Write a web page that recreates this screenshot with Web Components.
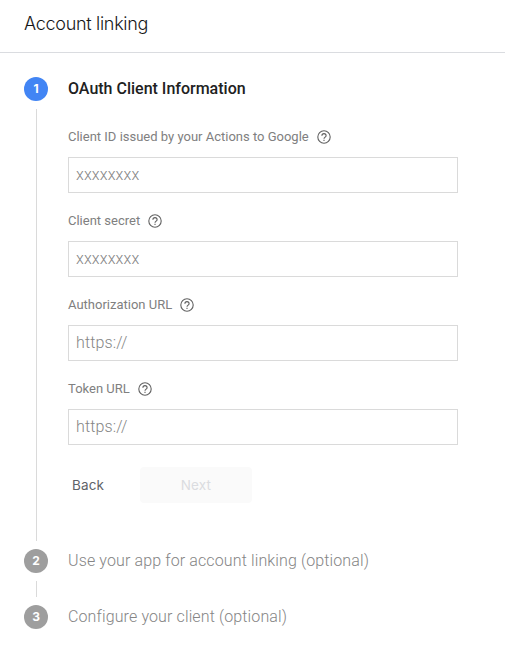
<!DOCTYPE html>
<html lang="en">
<head>
<meta charset="utf-8">
<title>Account linking</title>
<style>
  body { margin: 0; background: #fff; font-family: Roboto, "Liberation Sans", sans-serif; color: #212121; }
</style>
</head>
<body>
<link-panel heading="Account linking">
  <link-step number="1" label="OAuth Client Information" active>
    <text-field label="Client ID issued by your Actions to Google">xxxxxxxx</text-field>
    <text-field label="Client secret">xxxxxxxx</text-field>
    <text-field label="Authorization URL">https://</text-field>
    <text-field label="Token URL">https://</text-field>
    <step-actions>
      <action-button>Back</action-button>
      <action-button disabled>Next</action-button>
    </step-actions>
  </link-step>
  <link-step number="2" label="Use your app for account linking (optional)"></link-step>
  <link-step number="3" label="Configure your client (optional)" last></link-step>
</link-panel>
<script>
const define = (name, render) => customElements.define(name, class extends HTMLElement {
  constructor() {
    super();
    this.attachShadow({ mode: 'open' }).innerHTML = render(this);
  }
});

define('link-panel', el => `
  <style>
    :host { display: block; }
    header { box-sizing: border-box; height: 53px; padding: 0 24px; border-bottom: 1px solid #dadce0;
      font: 300 18px/48px Inter, sans-serif; letter-spacing: -.3px; color: #151618; }
    main { padding: 24px 24px 0; }
  </style>
  <header><span>${el.getAttribute('heading')}</span></header>
  <main><slot></slot></main>`);

define('link-step', el => `
  <style>
    :host { display: grid; grid-template-columns: 24px 390px; column-gap: 20px; }
    .rail { display: flex; flex-direction: column; align-items: center; }
    .badge { width: 24px; height: 24px; flex: none; border-radius: 50%; background: #9e9e9e; color: #fff;
      font: 700 12px/24px Inter, sans-serif; text-align: center; }
    .line { width: 1px; flex: 1; min-height: 16px; margin: 8px 0; background: #dadada; align-self: flex-start; margin-left: 12px; }
    h2 { margin: 0; font-size: 16px; line-height: 24px; font-weight: 300; color: #858585; letter-spacing: .125px; white-space: nowrap; }
    :host([active]) .badge { background: #4285f4; }
    :host([active]) h2 { font-weight: 500; color: #212121; letter-spacing: 0; }
    :host([last]) .line { display: none; }
    :host([active]) .body { padding-bottom: 46px; }
    ::slotted(text-field:first-of-type) { padding-top: 23px; }
  </style>
  <div class="rail"><div class="badge">${el.getAttribute('number')}</div><div class="line"></div></div>
  <div class="body"><h2><span>${el.getAttribute('label')}</span></h2><slot></slot></div>`);

define('help-icon', () => `
  <style>:host { display: block; width: 16px; height: 16px; margin-top: 1px; } svg { display: block; }</style>
  <svg width="16" height="16" viewBox="0 0 16 16" fill="none" stroke="#616161" stroke-width="1.1">
    <circle cx="8" cy="8" r="6.200"/>
    <path d="M5.900 6.700a2.100 2.100 0 1 1 4.200 0c0 1.300-2.100 1.500-2.100 3"/>
    <path d="M8 10.700v1.200"/>
  </svg>`);

define('text-field', el => `
  <style>
    :host { display: block; padding-top: 15px; }
    .label { display: flex; align-items: center; gap: 7px; height: 24px; font-size: 13px; font-weight: 400; color: #808080; }
    .box { box-sizing: border-box; height: 36px; margin-top: 9px; padding: 0 7px; border: 1px solid #dadada;
      font-size: 16px; line-height: 34px; font-weight: 300; color: #858585; letter-spacing: .125px; }
  </style>
  <div class="label"><span>${el.getAttribute('label')}</span><help-icon></help-icon></div>
  <div class="box"><slot></slot></div>`);

define('step-actions', () => `
  <style>:host { display: flex; gap: 36px; padding: 22px 0 0 4px; }</style><slot></slot>`);

define('action-button', () => `
  <style>
    :host { display: block; height: 36px; width: 32px; border-radius: 4px; text-align: center;
      font: 400 13.5px/36px Inter, sans-serif; letter-spacing: .15px; color: #5f6368; }
    :host([disabled]) { width: 112px; background: #fafafa; color: #dadce0; }
  </style>
  <slot></slot>`);
</script>
</body>
</html>
